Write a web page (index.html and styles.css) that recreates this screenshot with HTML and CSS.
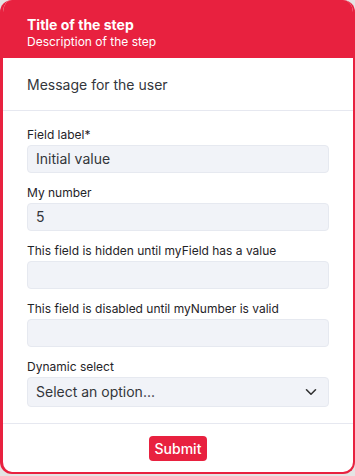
FILE: index.html
```html
<!DOCTYPE html>
<html lang="en">
<head>
   <meta charset="utf-8">
   <title>Step form</title>
   <link rel="stylesheet" href="styles.css">
</head>
<body>
   <div class="card">
      <div class="card-header">
         <div class="step-title">Title of the step</div>
         <div class="step-desc">Description of the step</div>
      </div>

      <div class="message">Message for the user</div>

      <form class="form">
         <div class="field">
            <label>Field label*</label>
            <div class="input">Initial value</div>
         </div>
         <div class="field">
            <label>My number</label>
            <div class="input">5</div>
         </div>
         <div class="field">
            <label>This field is hidden until myField has a value</label>
            <div class="input"></div>
         </div>
         <div class="field">
            <label>This field is disabled until myNumber is valid</label>
            <div class="input"></div>
         </div>
         <div class="field">
            <label>Dynamic select</label>
            <div class="input select">
               <span>Select an option...</span>
               <svg width="12" height="8" viewBox="0 0 12 8">
                  <path d="M1.5 1.8 L6 6.2 L10.5 1.8" fill="none" stroke="#333" stroke-width="1.6" stroke-linecap="round" stroke-linejoin="round"/>
               </svg>
            </div>
         </div>
      </form>

      <div class="card-footer">
         <button class="submit">Submit</button>
      </div>
   </div>
</body>
</html>
```

FILE: styles.css
```css
body {
   margin: 0;
   background: #e4e4e4;
   font-family: Inter, "Liberation Sans", sans-serif;
   color: #1f2328;
}

.card {
   box-sizing: border-box;
   width: 355px;
   height: 474px;
   background: #fff;
   border: 2px solid #e8213f;
   border-left-width: 3px;
   border-top: none;
   border-radius: 12px;
   overflow: hidden;
   display: flex;
   flex-direction: column;
}

.card-header {
   background: #e8213f;
   color: #fff;
   padding: 16px 24px 8px 27px;
   margin-right: -2px;
   margin-left: -3px;
}

.step-title {
   font-size: 14px;
   font-weight: 700;
   line-height: 18px;
}

.step-desc {
   font-size: 12px;
   line-height: 16px;
}

.message {
   padding: 17px 24px 15px;
   font-size: 14px;
   line-height: 20px;
   color: #33363b;
   border-bottom: 1px solid #e6e8f0;
}

.form {
   padding: 16px 24px 16px;
   display: flex;
   flex-direction: column;
   gap: 12px;
   border-bottom: 1px solid #e6e8f0;
}

.field label {
   display: block;
   font-size: 12px;
   line-height: 16px;
   margin-bottom: 2px;
   color: #1f2328;
}

.input {
   box-sizing: border-box;
   height: 28px;
   background: #f1f3f8;
   border: 1px solid #e6e9f0;
   border-radius: 4px;
   padding: 0 8px;
   font-size: 14px;
   line-height: 26px;
   color: #33363b;
}

.select {
   height: 30px;
   line-height: 28px;
   display: flex;
   justify-content: space-between;
   align-items: center;
   padding-right: 11px;
}

.card-footer {
   display: flex;
   justify-content: center;
   padding-top: 12px;
}

.submit {
   background: #e8213f;
   color: #fff;
   border: none;
   border-radius: 4px;
   height: 25px;
   padding: 0 6px;
   font-family: Inter, "Liberation Sans", sans-serif;
   font-size: 14px;
   font-weight: 500;
   cursor: pointer;
}
```
